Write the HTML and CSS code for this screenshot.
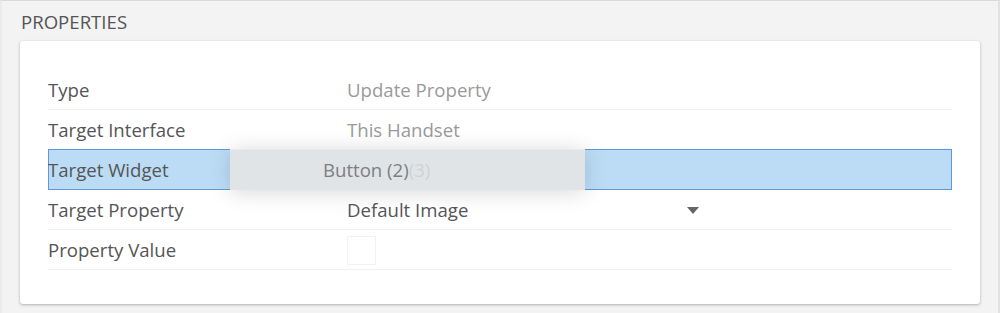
FILE: index.html
```html
<!DOCTYPE html>
<html>
<head>
<meta charset="utf-8">
<link rel="stylesheet" href="styles.css">
</head>
<body>
<div class="panel">
  <div class="panel-title">PROPERTIES</div>
  <div class="card">
    <div class="row">
      <div class="label">Type</div>
      <div class="value muted">Update Property</div>
    </div>
    <div class="row">
      <div class="label">Target Interface</div>
      <div class="value muted">This Handset</div>
    </div>
    <div class="row selected">
      <div class="label">Target Widget</div>
      <div class="value"></div>
      <div class="drag-ghost"><span class="ghost-main">Button (2)</span><span class="ghost-faint">(3)</span></div>
    </div>
    <div class="row">
      <div class="label">Target Property</div>
      <div class="value select">
        <span>Default Image</span>
        <span class="caret"></span>
      </div>
    </div>
    <div class="row">
      <div class="label">Property Value</div>
      <div class="value"><span class="swatch"></span></div>
    </div>
  </div>
</div>
</body>
</html>
```
FILE: styles.css
```css
* { box-sizing: border-box; }
html, body {
  margin: 0;
  padding: 0;
  background: #f3f3f3;
}
body {
  font-family: "Open Sans", "Liberation Sans", sans-serif;
  font-size: 18.6px;
  color: #555;
}
.panel {
  width: 1000px;
  height: 313px;
  background: #f3f3f3;
  border-top: 1px solid #dadada;
  border-left: 2px solid #ebebeb;
  border-right: 2px solid #e2e2e2;
  padding: 0 18px;
}
.panel-title {
  font-size: 18.6px;
  line-height: 24px;
  padding: 9px 0 7px 1px;
  color: #555;
}
.card {
  background: #fff;
  border-radius: 3px;
  box-shadow: 0 1px 3px rgba(0, 0, 0, 0.28);
  padding: 29px 28px 34px 28px;
  height: 263px;
}
.row {
  position: relative;
  display: grid;
  grid-template-columns: 299px 1fr;
  align-items: center;
  height: 40px;
  border-bottom: 1px solid #f1f1f1;
}
.row.selected {
  margin-top: -1px;
  height: 41px;
  background: #bcdcf6;
  border: 1px solid #5a9ae0;
}
.label {
  color: #555;
  line-height: 24px;
}
.row.selected .label { margin-left: -1px; }
.value {
  color: #555;
  line-height: 24px;
}
.value.muted { color: #9a9a9a; }
.value.select {
  display: flex;
  align-items: center;
  justify-content: space-between;
  width: 352px;
}
.caret {
  width: 0;
  height: 0;
  border-left: 6px solid transparent;
  border-right: 6px solid transparent;
  border-top: 7px solid #666;
  margin-top: 1px;
}
.swatch {
  display: block;
  width: 29px;
  height: 29px;
  border: 1px solid #f2f2f2;
  margin-top: 1px;
}
.drag-ghost {
  position: absolute;
  left: 181px;
  top: -1px;
  width: 355px;
  height: 41px;
  background: #e1e4e7;
  border-top: 1px solid #e8eaec;
  box-shadow: 0 2px 22px rgba(0, 0, 0, 0.16);
  padding-left: 93px;
  display: flex;
  align-items: center;
  line-height: 24px;
}
.ghost-main { color: #7d7f81; }
.ghost-faint { color: #d0d2d4; }
```
